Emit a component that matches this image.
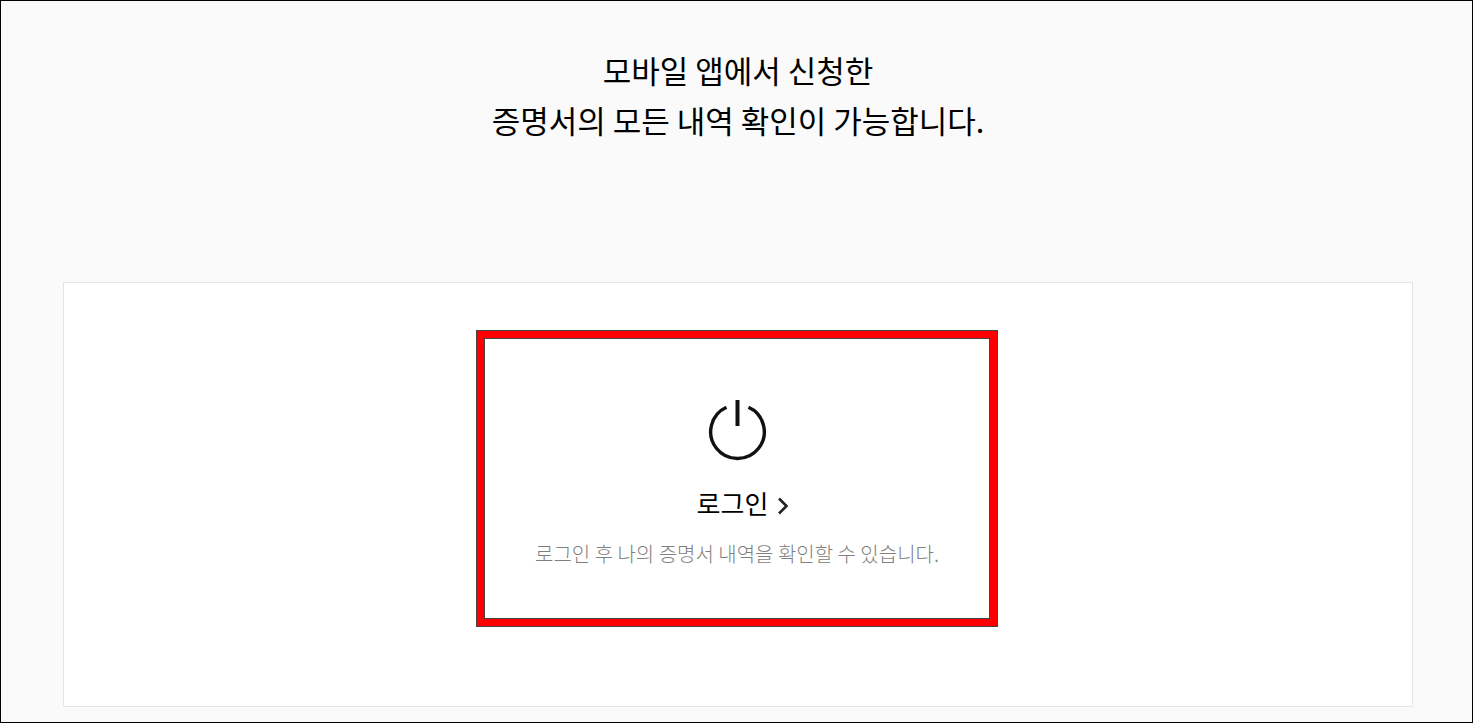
<main class="page">
  <h1>모바일 앱에서 신청한<br />증명서의 모든 내역 확인이 가능합니다.</h1>
  <section class="panel">
    <a class="login" href="#login">
      <svg class="power" viewBox="0 0 60 62" aria-hidden="true">
        <path d="M19.500 8.300A26.800 26.800 0 1 0 41.500 8.300" fill="none" stroke="#111" stroke-width="3.400" />
        <path d="M30.500 1V27" fill="none" stroke="#111" stroke-width="4" />
      </svg>
      <strong>로그인
        <svg class="arrow" viewBox="0 0 12 18" aria-hidden="true">
          <path d="M2 1.500l7.500 7.500-7.500 7.500" fill="none" stroke="#222" stroke-width="2.600" />
        </svg>
      </strong>
      <span class="note">로그인 후 나의 증명서 내역을 확인할 수 있습니다.</span>
    </a>
  </section>
</main>

<style>
  :global(body) {
    background: #fafafa;
  }
  .page {
    box-sizing: border-box;
    min-height: 100vh;
    padding: 44px 59px 15px 62px;
    border: 1px solid #000;
    background: #fafafa;
    color: #000;
    font-family: "Noto Sans CJK KR", sans-serif;
  }
  h1 {
    margin: 0 0 137px;
    font-size: 31px;
    font-weight: 400;
    line-height: 50px;
    text-align: center;
  }
  .panel {
    display: flex;
    justify-content: center;
    padding: 47px 2px 79px 0;
    border: 1px solid #e5e5e5;
    background: #fff;
  }
  .login {
    box-sizing: border-box;
    display: flex;
    flex-direction: column;
    align-items: center;
    width: 522px;
    max-width: 100%;
    padding: 68px 40px 58px;
    border: 1px solid #444;
    box-shadow: inset 0 0 0 7px #f00, inset 0 0 0 8px #444;
    color: #000;
    text-decoration: none;
  }
  .power {
    width: 60px;
    height: 62px;
  }
  strong {
    display: flex;
    align-items: center;
    gap: 9px;
    margin-top: 24px;
    padding-left: 12px;
    font-size: 26px;
    font-weight: 400;
    line-height: 36px;
  }
  .arrow {
    width: 12px;
    height: 18px;
    margin-top: 6px;
  }
  .note {
    margin-top: 19px;
    color: #808080;
    font-size: 20px;
    font-weight: 300;
    line-height: 28px;
  }
</style>
